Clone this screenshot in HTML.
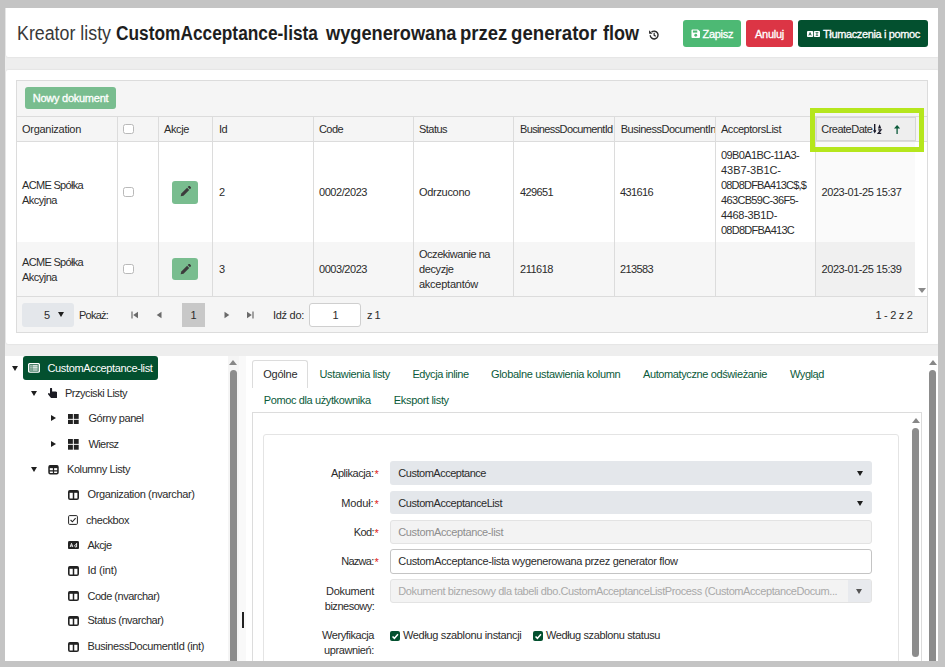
<!DOCTYPE html>
<html lang="pl">
<head>
<meta charset="utf-8">
<title>Kreator listy</title>
<style>
*{box-sizing:border-box;margin:0;padding:0}
html,body{width:945px;height:667px;overflow:hidden}
body{background:#c4c4c4;font-family:"Liberation Sans",sans-serif;font-size:11px;color:#2b2b2b;position:relative}
.abs,.t,.box{position:absolute}
.t{white-space:nowrap;line-height:14px;font-size:11px;letter-spacing:-0.35px}
#page{position:absolute;left:5px;top:8px;width:933px;height:653px;background:#eeeeee;overflow:hidden}
/* coordinates inside #page are page coords minus (5,8); we use a wrapper shifted back */
#w{position:absolute;left:-5px;top:-8px;width:945px;height:667px}
.white{background:#fff;border-radius:2px;box-shadow:0 0 2px rgba(0,0,0,.13)}
.btn{position:absolute;border-radius:3px;color:#fff;text-align:center}
.wt{color:#fff;-webkit-text-stroke:.3px #fff}
.vline{position:absolute;width:1px;background:#dcdcdc}
.hline{position:absolute;height:1px;background:#dcdcdc}
.cb{position:absolute;width:10.6px;height:10.6px;border:1px solid #b9b9b9;border-radius:2.5px;background:#fff}
.tri-d{position:absolute;width:0;height:0;border-left:3.5px solid transparent;border-right:3.5px solid transparent;border-top:5px solid #1e1e1e}
.tri-r{position:absolute;width:0;height:0;border-top:3.5px solid transparent;border-bottom:3.5px solid transparent;border-left:5px solid #1e1e1e}
.tri-u{position:absolute;width:0;height:0;border-left:4px solid transparent;border-right:4px solid transparent;border-bottom:5.5px solid #878787}
.sel{position:absolute;background:#e4e7eb;border-radius:3px}
.link{color:#0b5a3a}
</style>
</head>
<body>
<div id="page"><div id="w">

<!-- ===== HEADER ===== -->
<div class="box white" id="hdr" style="left:6.3px;top:6px;width:933px;height:51.2px"></div>
<div class="t" style="transform-origin:0 0;transform:scaleX(0.8902);font-size:20px;line-height:26px;letter-spacing:0;top:20px;left:16.7px;color:#383838">Kreator listy</div>
<div class="t" style="transform-origin:0 0;transform:scaleX(0.8654);font-size:20px;line-height:26px;letter-spacing:0;top:20px;left:116px;color:#1e1e1e;font-weight:700">CustomAcceptance-lista</div>
<div class="t" style="transform-origin:0 0;transform:scaleX(0.9101);font-size:20px;line-height:26px;letter-spacing:0;top:20px;left:326.3px;color:#1e1e1e;font-weight:700">wygenerowana</div>
<div class="t" style="transform-origin:0 0;transform:scaleX(0.9252);font-size:20px;line-height:26px;letter-spacing:0;top:20px;left:460px;color:#1e1e1e;font-weight:700">przez</div>
<div class="t" style="transform-origin:0 0;transform:scaleX(0.9322);font-size:20px;line-height:26px;letter-spacing:0;top:20px;left:511px;color:#1e1e1e;font-weight:700">generator</div>
<div class="t" style="transform-origin:0 0;transform:scaleX(0.9000);font-size:20px;line-height:26px;letter-spacing:0;top:20px;left:603px;color:#1e1e1e;font-weight:700">flow</div>
<svg class="abs" style="left:647.5px;top:29px" width="12" height="12" viewBox="0 0 16 16"><path d="M3 8.2a5.2 5.2 0 1 0 1.7-4" fill="none" stroke="#2a2a2a" stroke-width="1.9"/><path d="M1.4 1.8v4.6h4.6z" fill="#2a2a2a"/><path d="M8.2 5v3.4l2.2 1.3" fill="none" stroke="#2a2a2a" stroke-width="1.6"/></svg>

<div class="btn" style="left:683px;top:20px;width:58px;height:27px;background:#4db974"></div>
<div class="btn" style="left:746px;top:20px;width:47px;height:27px;background:#dc3545"></div>
<div class="btn" style="left:798px;top:20px;width:130px;height:27px;background:#03502f"></div>
<svg class="abs" style="left:690.7px;top:29px" width="9.5" height="9.5" viewBox="0 0 10 10"><path d="M0.5 1.5a1 1 0 0 1 1-1h5.8l2.2 2.2v5.8a1 1 0 0 1-1 1h-7a1 1 0 0 1-1-1z" fill="#fff"/><rect x="2" y="1.6" width="4.6" height="2.2" fill="#4db974"/><circle cx="5" cy="6.6" r="1.5" fill="#4db974"/></svg>
<div class="t wt" style="letter-spacing:-0.318px;left:702.6px;top:27px">Zapisz</div>
<div class="t wt" style="letter-spacing:-0.263px;left:755px;top:27px">Anuluj</div>
<svg class="abs" style="left:807.3px;top:31px" width="13" height="6" viewBox="0 0 14 8" preserveAspectRatio="none"><rect x="0" y="0" width="6.6" height="8" rx="1" fill="#fff"/><rect x="7.4" y="0" width="6.6" height="8" rx="1" fill="#fff"/><path d="M2 6l1.3-4 1.3 4M2.5 4.8h1.6" stroke="#03502f" stroke-width=".9" fill="none"/><path d="M9.2 2.2h3M10.7 2.2v3.6M9.4 5.8h2.6" stroke="#03502f" stroke-width=".9" fill="none"/></svg>
<div class="t wt" style="letter-spacing:-0.365px;left:823px;top:27px">Tłumaczenia i pomoc</div>

<!-- ===== GRID PANEL ===== -->
<div class="box white" id="gridpanel" style="left:6.3px;top:69.6px;width:933px;height:274.2px"></div>
<div class="box" id="grid" style="left:16px;top:80px;width:912px;height:253px;background:#f5f5f5;border:1px solid #dcdcdc"></div>

<!--GRID-->
<!-- toolbar -->
<div class="btn" style="left:25px;top:87px;width:91px;height:22px;background:#79bd8f"></div>
<div class="t wt" style="letter-spacing:-0.260px;left:32.8px;top:91.4px">Nowy dokument</div>
<div class="hline" style="left:17px;top:116px;width:910px"></div>
<!-- rows bg -->
<div class="box" style="left:17px;top:142px;width:898px;height:100px;background:#fff"></div>
<div class="box" style="left:17px;top:242px;width:898px;height:54px;background:#f6f6f6"></div>
<div class="box" style="left:815px;top:142px;width:100px;height:100px;background:#fafafa"></div>
<div class="box" style="left:815px;top:242px;width:100px;height:54px;background:#f0f0f0"></div>
<div class="box" style="left:915px;top:142px;width:12px;height:154px;background:#fff"></div>
<div class="hline" style="left:17px;top:141px;width:910px"></div>
<div class="hline" style="left:17px;top:296px;width:910px"></div>
<!-- column lines -->
<div class="vline" style="left:117px;top:117px;height:179px"></div>
<div class="vline" style="left:158px;top:117px;height:179px"></div>
<div class="vline" style="left:212px;top:117px;height:179px"></div>
<div class="vline" style="left:313px;top:117px;height:179px"></div>
<div class="vline" style="left:413px;top:117px;height:179px"></div>
<div class="vline" style="left:513px;top:117px;height:179px"></div>
<div class="vline" style="left:614px;top:117px;height:179px"></div>
<div class="vline" style="left:715px;top:117px;height:179px"></div>
<div class="vline" style="left:815px;top:117px;height:179px"></div>
<!-- header texts -->
<div class="t" style="letter-spacing:-0.281px;left:22px;top:122px">Organization</div>
<div class="cb" style="left:123.3px;top:123.8px"></div>
<div class="t" style="letter-spacing:-0.381px;left:164px;top:122px">Akcje</div>
<div class="t" style="letter-spacing:-0.594px;left:219px;top:122px">Id</div>
<div class="t" style="letter-spacing:-0.574px;left:319px;top:122px">Code</div>
<div class="t" style="letter-spacing:-0.531px;left:419px;top:122px">Status</div>
<div class="box" style="left:514px;top:117px;width:100px;height:24px;overflow:hidden"><div class="t" style="letter-spacing:-0.631px;left:6px;top:5px">BusinessDocumentId</div></div>
<div class="box" style="left:615px;top:117px;width:100px;height:24px;overflow:hidden"><div class="t" style="letter-spacing:-0.482px;left:5.7px;top:5px">BusinessDocumentInstanceId</div></div>
<div class="t" style="letter-spacing:-0.464px;left:721px;top:122px">AcceptorsList</div>
<!-- sorted header -->
<div class="box" style="left:816px;top:117px;width:99.5px;height:24px;background:#eeeeee;border:1px solid #d6d6d6;border-right-width:1.5px"></div>
<div class="t" style="letter-spacing:-0.497px;left:821.2px;top:122px">CreateDate</div>
<svg class="abs" style="left:873px;top:123.5px" width="10" height="11" viewBox="0 0 10 11"><path d="M1.7 0v8" stroke="#1a1a2a" stroke-width="1.4"/><path d="M0 6.3h3.4L1.7 9.6z" fill="#1a1a2a"/><path d="M4.9 4.5l1.7-4.3 1.7 4.3z" fill="#1a1a2a"/><path d="M5.2 5.9h2.8L5.2 9.3h3" stroke="#1a1a2a" stroke-width="1.3" fill="none"/></svg>
<svg class="abs" style="left:894.3px;top:124.5px" width="6.2" height="9.4" viewBox="0 0 6.2 9.4"><path d="M0 3.5L3.1 0l3.1 3.5z" fill="#0b5a3a"/><path d="M3.1 3v6.2" stroke="#0b5a3a" stroke-width="1.3"/></svg>
<div class="box" style="left:810px;top:108px;width:114px;height:44px;border:5px solid #b5e61d"></div>
<!-- row 1 -->
<div class="t" style="left:22px;top:178px;line-height:15px;white-space:normal;width:90px"><span class="t" style="letter-spacing:-0.680px;position:static">ACME Spółka</span><br><span class="t" style="letter-spacing:-0.504px;position:static">Akcyjna</span></div>
<div class="cb" style="left:123.3px;top:186.5px"></div>
<div class="btn" style="left:172px;top:180.5px;width:26.3px;height:23px;background:#79bd8f"></div>
<svg class="abs" style="left:179.7px;top:186.2px" width="11" height="11" viewBox="0 0 10 10"><path d="M0.6 9.4l.6-2.6 5.2-5.2 2 2-5.2 5.2z" fill="#3c3c3c"/><path d="M7 1l.9-.9a.7.7 0 0 1 1 0l1 1a.7.7 0 0 1 0 1L9 3z" fill="#3c3c3c"/></svg>
<div class="t" style="left:219px;top:185px">2</div>
<div class="t" style="letter-spacing:-0.444px;left:319px;top:185px">0002/2023</div>
<div class="t" style="letter-spacing:-0.313px;left:419px;top:185px">Odrzucono</div>
<div class="t" style="letter-spacing:-0.620px;left:520px;top:185px">429651</div>
<div class="t" style="letter-spacing:-0.620px;left:620px;top:185px">431616</div>
<div class="t" style="left:721px;top:148px;line-height:15px;white-space:normal;width:95px"><span class="t" style="letter-spacing:-0.616px;position:static">09B0A1BC-11A3-</span><br><span class="t" style="letter-spacing:-0.055px;position:static">43B7-3B1C-</span><br><span class="t" style="letter-spacing:-0.816px;position:static">08D8DFBA413C$,$</span><br><span class="t" style="letter-spacing:-0.658px;position:static">463CB59C-36F5-</span><br><span class="t" style="letter-spacing:-0.333px;position:static">4468-3B1D-</span><br><span class="t" style="letter-spacing:-0.745px;position:static">08D8DFBA413C</span></div>
<div class="t" style="letter-spacing:-0.429px;left:821.5px;top:185px">2023-01-25 15:37</div>
<!-- row 2 -->
<div class="t" style="left:22px;top:255px;line-height:15px;white-space:normal;width:90px"><span class="t" style="letter-spacing:-0.680px;position:static">ACME Spółka</span><br><span class="t" style="letter-spacing:-0.504px;position:static">Akcyjna</span></div>
<div class="cb" style="left:123.3px;top:263.8px"></div>
<div class="btn" style="left:172px;top:258.3px;width:26.3px;height:22px;background:#79bd8f"></div>
<svg class="abs" style="left:179.7px;top:263.8px" width="11" height="11" viewBox="0 0 10 10"><path d="M0.6 9.4l.6-2.6 5.2-5.2 2 2-5.2 5.2z" fill="#3c3c3c"/><path d="M7 1l.9-.9a.7.7 0 0 1 1 0l1 1a.7.7 0 0 1 0 1L9 3z" fill="#3c3c3c"/></svg>
<div class="t" style="left:219px;top:262px">3</div>
<div class="t" style="letter-spacing:-0.444px;left:319px;top:262px">0003/2023</div>
<div class="t" style="left:419px;top:247px;line-height:15px;white-space:normal;width:95px"><span class="t" style="letter-spacing:-0.475px;position:static">Oczekiwanie na</span><br><span class="t" style="letter-spacing:-0.400px;position:static">decyzje</span><br><span class="t" style="letter-spacing:-0.251px;position:static">akceptantów</span></div>
<div class="t" style="letter-spacing:-0.482px;left:520px;top:262px">211618</div>
<div class="t" style="letter-spacing:-0.620px;left:620px;top:262px">213583</div>
<div class="t" style="letter-spacing:-0.429px;left:821.5px;top:262px">2023-01-25 15:39</div>
<div class="tri-d" style="left:917.8px;top:288px;border-left-width:4px;border-right-width:4px;border-top:5.5px solid #8a8a8a"></div>
<!-- pager -->
<div class="box" style="left:22px;top:303px;width:51.5px;height:24px;background:#e4e7eb;border-radius:3px"></div>
<div class="t" style="left:44px;top:308px">5</div>
<div class="tri-d" style="left:58px;top:312px"></div>
<div class="t" style="letter-spacing:-0.773px;left:79px;top:308px">Pokaż:</div>
<svg class="abs" style="left:131px;top:311px" width="8" height="8" viewBox="0 0 8 8"><path d="M1 .5v7" stroke="#6a6a6a" stroke-width="1.2"/><path d="M7 .8v6.4L2.2 4z" fill="#6a6a6a"/></svg>
<svg class="abs" style="left:156px;top:311px" width="6" height="8" viewBox="0 0 6 8"><path d="M5.5 .8v6.4L.7 4z" fill="#6a6a6a"/></svg>
<div class="box" style="left:182px;top:303px;width:23px;height:24px;background:#c8c8c8"></div>
<div class="t" style="left:190.5px;top:308px">1</div>
<svg class="abs" style="left:224px;top:311px" width="6" height="8" viewBox="0 0 6 8"><path d="M.5 .8v6.4L5.3 4z" fill="#6a6a6a"/></svg>
<svg class="abs" style="left:246px;top:311px" width="8" height="8" viewBox="0 0 8 8"><path d="M7 .5v7" stroke="#6a6a6a" stroke-width="1.2"/><path d="M1 .8v6.4L5.8 4z" fill="#6a6a6a"/></svg>
<div class="t" style="letter-spacing:-0.290px;left:273px;top:308px">Idź do:</div>
<div class="box" style="left:309px;top:303px;width:52px;height:24px;background:#fff;border:1px solid #cfcfcf;border-radius:3px"></div>
<div class="t" style="left:332.5px;top:308px">1</div>
<div class="t" style="letter-spacing:-0.563px;left:367px;top:308px">z 1</div>
<div class="t" style="letter-spacing:-0.306px;left:875.5px;top:308px">1 - 2 z 2</div>
<!--/GRID-->

<!-- ===== LOWER PANELS ===== -->
<div class="box" id="treepanel" style="left:5px;top:355.6px;width:234px;height:312px;background:#fff"></div>
<div class="box" id="rightpanel" style="left:246px;top:355.6px;width:700px;height:312px;background:#fff"></div>

<!--TREE-->
<!-- splitter -->
<div class="box" style="left:227.6px;top:355.6px;width:11.4px;height:312px;background:#f5f5f5"></div>
<div class="box" style="left:239px;top:355.6px;width:7px;height:312px;background:#f9f9f9"></div>
<div class="box" style="left:242px;top:612px;width:2px;height:16px;background:#222"></div>
<!-- tree scrollbar -->
<div class="tri-u" style="left:229.4px;top:359.6px"></div>
<div class="box" style="left:230px;top:370px;width:7px;height:310px;background:#8c8c8c;border-radius:3.5px"></div>
<!-- root -->
<div class="tri-d" style="left:12px;top:366px"></div>
<div class="box" style="left:23.2px;top:355.8px;width:135.3px;height:24.5px;background:#03502f;border-radius:3px"></div>
<svg class="abs" style="left:28.2px;top:363.2px" width="12" height="9.8" viewBox="0 0 12 11" preserveAspectRatio="none"><rect x=".6" y=".6" width="10.8" height="9.8" rx="1.5" fill="rgba(255,255,255,.28)" stroke="#fff" stroke-width="1.3"/><path d="M2.4 3.2h1.2M4.5 3.2h5.1M2.4 5.5h1.2M4.5 5.5h5.1M2.4 7.8h1.2M4.5 7.8h5.1" stroke="#fff" stroke-width="1.2"/></svg>
<div class="t" style="letter-spacing:-0.357px;left:47.5px;top:360.5px;color:#fff">CustomAcceptance-list</div>
<!-- Przyciski Listy -->
<div class="tri-d" style="left:30.5px;top:391px"></div>
<svg class="abs" style="left:47.9px;top:388px" width="9.4" height="10.4" viewBox="0 0 9.4 10.4"><path d="M2 .9a1.05 1.05 0 0 1 2.1 0V3.6h3.6a1.7 1.7 0 0 1 1.7 1.7V8.4a2 2 0 0 1-2 2H4.2c-.7 0-1.2-.3-1.6-.9L.2 6.5c-.3-.5-.2-1 .2-1.3s.9-.2 1.200.2L2 5.9z" fill="#1c1c24"/></svg>
<div class="t" style="letter-spacing:-0.471px;left:65px;top:386px">Przyciski Listy</div>
<!-- Gorny panel -->
<div class="tri-r" style="left:51px;top:415px"></div>
<svg class="abs" style="left:68px;top:413.7px" width="10.7" height="10.7" viewBox="0 0 11 11"><rect x="0" y="0" width="5" height="5" fill="#222"/><rect x="6" y="0" width="5" height="5" fill="#222"/><rect x="0" y="6" width="5" height="5" fill="#222"/><rect x="6" y="6" width="5" height="5" fill="#222"/></svg>
<div class="t" style="letter-spacing:-0.449px;left:88.5px;top:411px">Górny panel</div>
<!-- Wiersz -->
<div class="tri-r" style="left:51px;top:440.5px"></div>
<svg class="abs" style="left:68px;top:439px" width="10.7" height="10.7" viewBox="0 0 11 11"><rect x="0" y="0" width="5" height="5" fill="#222"/><rect x="6" y="0" width="5" height="5" fill="#222"/><rect x="0" y="6" width="5" height="5" fill="#222"/><rect x="6" y="6" width="5" height="5" fill="#222"/></svg>
<div class="t" style="letter-spacing:-0.602px;left:88.5px;top:436.5px">Wiersz</div>
<!-- Kolumny Listy -->
<div class="tri-d" style="left:31px;top:467px"></div>
<svg class="abs" style="left:47.7px;top:465px" width="11" height="9.5" viewBox="0 0 11 10"><rect x=".8" y=".8" width="9.4" height="8.4" rx="1.3" fill="none" stroke="#222" stroke-width="1.6"/><path d="M.8 2h9.4" stroke="#222" stroke-width="2.6"/><path d="M.8 6.2h9.4M5.5 2.5v7" stroke="#222" stroke-width="1.3"/></svg>
<div class="t" style="letter-spacing:-0.422px;left:67px;top:462px">Kolumny Listy</div>
<!-- columns -->
<svg class="abs" style="left:68px;top:489.5px" width="11" height="10" viewBox="0 0 11 10"><rect x=".8" y=".8" width="9.4" height="8.4" rx="1.3" fill="none" stroke="#222" stroke-width="1.6"/><path d="M.8 1.7h9.4" stroke="#222" stroke-width="2.2"/><path d="M5.5 1v8" stroke="#222" stroke-width="1.5"/></svg>
<div class="t" style="letter-spacing:-0.372px;left:87.5px;top:487px">Organization (nvarchar)</div>
<svg class="abs" style="left:68px;top:514.5px" width="10" height="10" viewBox="0 0 10 10"><rect x=".6" y=".6" width="8.8" height="8.8" rx="1" fill="none" stroke="#222" stroke-width="1"/><path d="M2.6 5l1.8 1.8 3.2-3.6" fill="none" stroke="#222" stroke-width="1.1"/></svg>
<div class="t" style="letter-spacing:-0.436px;left:86px;top:513px">checkbox</div>
<svg class="abs" style="left:68px;top:541.3px" width="11" height="8.2" viewBox="0 0 11 9" preserveAspectRatio="none"><rect x="0" y="0" width="11" height="9" rx="1.5" fill="#222"/><path d="M2.2 6.6l1.3-4 1.3 4M2.7 5.4h1.6" stroke="#fff" stroke-width=".9" fill="none"/><path d="M8.6 2.2v4.4M8.6 4.2a1.3 1.3 0 1 0 0 2.2" stroke="#fff" stroke-width=".9" fill="none"/></svg>
<div class="t" style="letter-spacing:-0.581px;left:87.5px;top:538px">Akcje</div>
<svg class="abs" style="left:68px;top:565.5px" width="11" height="10" viewBox="0 0 11 10"><rect x=".8" y=".8" width="9.4" height="8.4" rx="1.3" fill="none" stroke="#222" stroke-width="1.6"/><path d="M.8 1.7h9.4" stroke="#222" stroke-width="2.2"/><path d="M5.5 1v8" stroke="#222" stroke-width="1.5"/></svg>
<div class="t" style="letter-spacing:-0.211px;left:87.5px;top:562.5px">Id (int)</div>
<svg class="abs" style="left:68px;top:591px" width="11" height="10" viewBox="0 0 11 10"><rect x=".8" y=".8" width="9.4" height="8.4" rx="1.3" fill="none" stroke="#222" stroke-width="1.6"/><path d="M.8 1.7h9.4" stroke="#222" stroke-width="2.2"/><path d="M5.5 1v8" stroke="#222" stroke-width="1.5"/></svg>
<div class="t" style="letter-spacing:-0.499px;left:87.5px;top:588.5px">Code (nvarchar)</div>
<svg class="abs" style="left:68px;top:616px" width="11" height="10" viewBox="0 0 11 10"><rect x=".8" y=".8" width="9.4" height="8.4" rx="1.3" fill="none" stroke="#222" stroke-width="1.6"/><path d="M.8 1.7h9.4" stroke="#222" stroke-width="2.2"/><path d="M5.5 1v8" stroke="#222" stroke-width="1.5"/></svg>
<div class="t" style="letter-spacing:-0.493px;left:87.5px;top:613px">Status (nvarchar)</div>
<svg class="abs" style="left:68px;top:641.5px" width="11" height="10" viewBox="0 0 11 10"><rect x=".8" y=".8" width="9.4" height="8.4" rx="1.3" fill="none" stroke="#222" stroke-width="1.6"/><path d="M.8 1.7h9.4" stroke="#222" stroke-width="2.2"/><path d="M5.5 1v8" stroke="#222" stroke-width="1.5"/></svg>
<div class="t" style="letter-spacing:-0.394px;left:87.5px;top:638.5px">BusinessDocumentId (int)</div>
<!--/TREE-->

<!--TABS-->

<!--FORM-->
<!-- outer scrollbar -->
<div class="tri-u" style="left:928.7px;top:359.6px"></div>
<div class="box" style="left:929.2px;top:370px;width:7px;height:310px;background:#8c8c8c;border-radius:3.5px"></div>
<!-- tabs -->
<div class="box" style="left:252px;top:360px;width:56px;height:28px;border:1px solid #dcdcdc;border-bottom:none;border-radius:3px 3px 0 0"></div>
<div class="t" style="letter-spacing:-0.247px;left:263.3px;top:367px">Ogólne</div>
<div class="t link" style="letter-spacing:-0.332px;left:319.5px;top:367px">Ustawienia listy</div>
<div class="t link" style="letter-spacing:-0.413px;left:412.4px;top:367px">Edycja inline</div>
<div class="t link" style="letter-spacing:-0.315px;left:491px;top:367px">Globalne ustawienia kolumn</div>
<div class="t link" style="letter-spacing:-0.387px;left:643px;top:367px">Automatyczne odświeżanie</div>
<div class="t link" style="letter-spacing:-0.432px;left:790px;top:367px">Wygląd</div>
<div class="t link" style="letter-spacing:-0.379px;left:263.7px;top:392.5px">Pomoc dla użytkownika</div>
<div class="t link" style="letter-spacing:-0.331px;left:393.8px;top:392.5px">Eksport listy</div>
<!-- tab content -->
<div class="box" style="left:252px;top:412px;width:670px;height:270px;border:1px solid #dcdcdc"></div>
<div class="box" style="left:263px;top:434px;width:636px;height:250px;border:1px solid #e4e4e4;border-radius:3px"></div>
<!-- inner scrollbar -->
<div class="tri-u" style="left:911.5px;top:417.6px"></div>
<div class="box" style="left:912px;top:428px;width:7px;height:229px;background:#8c8c8c;border-radius:3.5px"></div>
<!-- labels -->
<div class="t" style="letter-spacing:-0.448px;left:331px;top:466px">Aplikacja:</div><div class="t" style="left:374.6px;top:467px;color:#e02020;letter-spacing:0;font-size:11px">*</div>
<div class="t" style="letter-spacing:-0.105px;left:341.2px;top:495.5px">Moduł:</div><div class="t" style="left:374.6px;top:496.5px;color:#e02020;letter-spacing:0;font-size:11px">*</div>
<div class="t" style="letter-spacing:-0.660px;left:353.8px;top:524.5px">Kod:</div><div class="t" style="left:374.6px;top:525.5px;color:#e02020;letter-spacing:0;font-size:11px">*</div>
<div class="t" style="letter-spacing:-0.715px;left:341.2px;top:554px">Nazwa:</div><div class="t" style="left:374.6px;top:555px;color:#e02020;letter-spacing:0;font-size:11px">*</div>
<div class="t" style="letter-spacing:-0.268px;left:326px;top:583.5px">Dokument</div>
<div class="t" style="letter-spacing:-0.492px;left:324.8px;top:599px">biznesowy:</div>
<div class="t" style="letter-spacing:-0.423px;left:322px;top:628px">Weryfikacja</div>
<div class="t" style="letter-spacing:-0.383px;left:324px;top:643px">uprawnień:</div>
<!-- fields -->
<div class="sel" style="left:389.5px;top:461.2px;width:482px;height:23.8px"></div>
<div class="t" style="letter-spacing:-0.481px;left:398.3px;top:466px">CustomAcceptance</div>
<div class="tri-d" style="left:856.5px;top:471px"></div>
<div class="sel" style="left:389.5px;top:490.7px;width:482px;height:23.7px"></div>
<div class="t" style="letter-spacing:-0.440px;left:398.3px;top:495.5px">CustomAcceptanceList</div>
<div class="tri-d" style="left:856.5px;top:500.5px"></div>
<div class="box" style="left:389.5px;top:519.7px;width:482px;height:24px;background:#f3f3f3;border:1px solid #e3e3e3;border-radius:3px"></div>
<div class="t" style="letter-spacing:-0.367px;left:398.3px;top:524.5px;color:#8e8e8e">CustomAcceptance-list</div>
<div class="box" style="left:389.5px;top:549px;width:482px;height:24.5px;background:#fff;border:1px solid #c4c4c4;border-radius:3px"></div>
<div class="t" style="letter-spacing:-0.341px;left:398.3px;top:554px">CustomAcceptance-lista wygenerowana przez generator flow</div>
<div class="box" style="left:389.5px;top:579px;width:482px;height:23.5px;background:#f3f3f3;border:1px solid #e3e3e3;border-radius:3px;overflow:hidden"><div class="box" style="left:457px;top:0;width:24px;height:22px;background:#e8eaee"></div></div>
<div class="t" style="letter-spacing:-0.408px;left:398.3px;top:583.5px;color:#a9a9a9">Dokument biznesowy dla tabeli dbo.CustomAcceptanceListProcess (CustomAcceptanceDocum...</div>
<div class="tri-d" style="left:856px;top:588.5px;border-top-color:#555"></div>
<!-- checkboxes -->
<div class="box" style="left:389.5px;top:630.5px;width:10.5px;height:10.5px;background:#03502f;border-radius:2px"></div>
<svg class="abs" style="left:389.5px;top:630.5px" width="10.5" height="10.5" viewBox="0 0 10 10"><path d="M2.4 5.2l1.8 1.8l3.4-3.8" fill="none" stroke="#fff" stroke-width="1.4"/></svg>
<div class="t" style="letter-spacing:-0.343px;left:403px;top:628px">Według szablonu instancji</div>
<div class="box" style="left:532.8px;top:630.5px;width:10.5px;height:10.5px;background:#03502f;border-radius:2px"></div>
<svg class="abs" style="left:532.8px;top:630.5px" width="10.5" height="10.5" viewBox="0 0 10 10"><path d="M2.4 5.2l1.8 1.8l3.4-3.8" fill="none" stroke="#fff" stroke-width="1.4"/></svg>
<div class="t" style="letter-spacing:-0.379px;left:546px;top:628px">Według szablonu statusu</div>
<!--/FORM-->

</div></div>
</body>
</html>
